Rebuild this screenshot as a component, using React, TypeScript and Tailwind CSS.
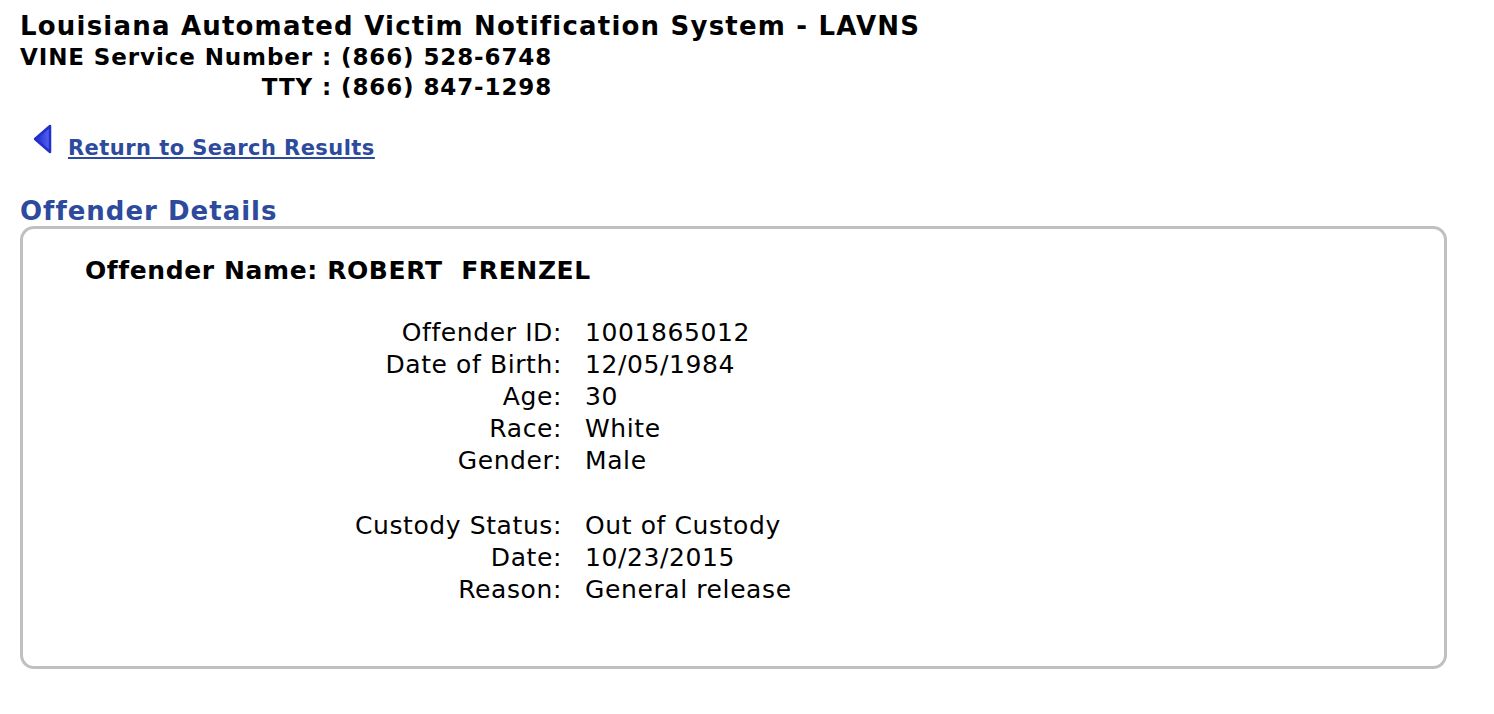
const rows: [string, string][] = [
  ["Offender ID:", "1001865012"],
  ["Date of Birth:", "12/05/1984"],
  ["Age:", "30"],
  ["Race:", "White"],
  ["Gender:", "Male"],
];

const custody: [string, string][] = [
  ["Custody Status:", "Out of Custody"],
  ["Date:", "10/23/2015"],
  ["Reason:", "General release"],
];

function BackArrow() {
  return (
    <svg width="21" height="30" viewBox="0 0 21 30">
      <defs>
        <linearGradient id="arr" x1="0" y1="0" x2="1" y2="0">
          <stop offset="0" stopColor="#1a26c8" />
          <stop offset="1" stopColor="#5565f2" />
        </linearGradient>
      </defs>
      <path d="M18 2 L3 15 L18 28 Z" fill="url(#arr)" stroke="#2030c8" strokeWidth="2.5" strokeLinejoin="round" />
    </svg>
  );
}

function DetailRows({ items }: { items: [string, string][] }) {
  return (
    <div className="grid grid-cols-[539px_1fr] gap-x-[23px] text-[25px] leading-[32px] tracking-[0.6px]">
      {items.map(([label, value]) => (
        <div key={label} className="contents">
          <span className="text-right">{label}</span>
          <span>{value}</span>
        </div>
      ))}
    </div>
  );
}

export default function App() {
  return (
    <div className="min-h-screen bg-white text-black font-['DejaVu_Sans',Verdana,sans-serif] pl-[20px] pr-[47px] pt-[10px]">
      <h1 className="text-[26px] font-bold leading-[32px] tracking-[1.2px]">
        Louisiana Automated Victim Notification System - LAVNS
      </h1>
      <div className="grid grid-cols-[auto_auto] w-max text-[23px] font-bold leading-[30px] tracking-[0.9px]">
        <span className="text-right">VINE Service Number :&nbsp;</span>
        <span>(866) 528-6748</span>
        <span className="text-right">TTY :&nbsp;</span>
        <span>(866) 847-1298</span>
      </div>

      <div className="flex items-start gap-[15px] mt-[22px] pl-[12px]">
        <BackArrow />
        <a href="#" className="text-[21px] font-bold text-[#2d4a9c] underline leading-[24px] tracking-[0.45px] mt-[12px]">
          Return to Search Results
        </a>
      </div>

      <h2 className="text-[26px] font-bold text-[#2d4a9c] leading-[30px] tracking-[1px] mt-[36px]">
        Offender Details
      </h2>

      <div className="border-[3px] border-[#c0c0c0] rounded-[14px] h-[443px] pt-[26px]">
        <div className="pl-[62px] text-[25px] font-bold leading-[32px] tracking-[0.6px] whitespace-pre">
          Offender Name: ROBERT  FRENZEL
        </div>
        <div className="mt-[30px]">
          <DetailRows items={rows} />
        </div>
        <div className="mt-[33px]">
          <DetailRows items={custody} />
        </div>
      </div>
    </div>
  );
}
